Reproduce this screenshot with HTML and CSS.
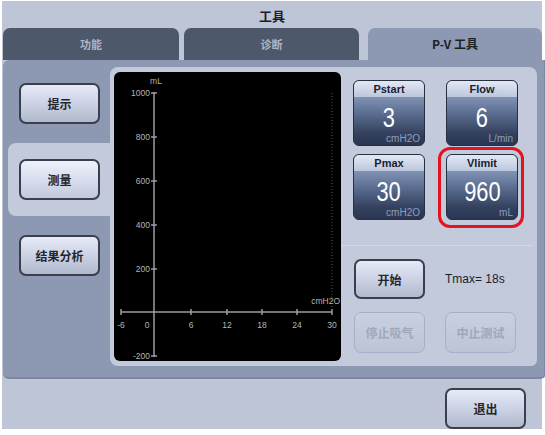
FILE: index.html
```html
<!DOCTYPE html>
<html>
    <head>
        <meta charset="UTF-8">
        <title>工具 - P-V 工具</title>
        <link rel="stylesheet" href="styles.css">
    </head>
    <body>
        <div class="window">
            <div class="title">工具</div>
            <div class="tabs">
                <div class="tab tab-first">功能</div>
                <div class="tab tab-second">诊断</div>
                <div class="tab active">P-V 工具</div>
            </div>
            <div class="panel">
                <div class="side">
                    <div class="slot"><button class="btn">提示</button></div>
                    <div class="slot current"><button class="btn">测量</button></div>
                    <div class="slot"><button class="btn">结果分析</button></div>
                </div>
                <div class="work">
                    <div class="chart">
                        <svg class="plot" width="227" height="289" viewBox="0 0 227 289">
                            <line class="dots" x1="218" y1="21" x2="218" y2="237"/>
                            <g class="axis">
                                <line x1="40" y1="20" x2="40" y2="285"/>
                                <line x1="7" y1="240" x2="218" y2="240"/>
                                <line x1="37" y1="21" x2="43" y2="21"/>
                                <line x1="37" y1="65" x2="43" y2="65"/>
                                <line x1="37" y1="109" x2="43" y2="109"/>
                                <line x1="37" y1="153" x2="43" y2="153"/>
                                <line x1="37" y1="197" x2="43" y2="197"/>
                                <line x1="37" y1="284" x2="43" y2="284"/>
                                <line x1="7" y1="237" x2="7" y2="243"/>
                                <line x1="77" y1="237" x2="77" y2="243"/>
                                <line x1="113" y1="237" x2="113" y2="243"/>
                                <line x1="148" y1="237" x2="148" y2="243"/>
                                <line x1="183" y1="237" x2="183" y2="243"/>
                                <line x1="218" y1="237" x2="218" y2="243"/>
                            </g>
                            <g class="labels ylabels">
                                <text x="36" y="24">1000</text>
                                <text x="36" y="68">800</text>
                                <text x="36" y="112">600</text>
                                <text x="36" y="156">400</text>
                                <text x="36" y="200">200</text>
                                <text x="36" y="287">-200</text>
                            </g>
                            <g class="labels xlabels">
                                <text x="7" y="256">-6</text>
                                <text x="33" y="256">0</text>
                                <text x="77" y="256">6</text>
                                <text x="113" y="256">12</text>
                                <text x="148" y="256">18</text>
                                <text x="183" y="256">24</text>
                                <text x="218" y="256">30</text>
                            </g>
                            <text class="labels" x="42" y="12" text-anchor="middle">mL</text>
                            <text class="labels" x="226" y="232" text-anchor="end">cmH2O</text>
                        </svg>
                    </div>
                    <div class="controls">
                        <div class="params">
                            <div class="param">
                                <div class="param-name">Pstart</div>
                                <div class="param-body"><span class="param-value">3</span><span class="param-unit">cmH2O</span></div>
                            </div>
                            <div class="param">
                                <div class="param-name">Flow</div>
                                <div class="param-body"><span class="param-value">6</span><span class="param-unit">L/min</span></div>
                            </div>
                            <div class="param">
                                <div class="param-name">Pmax</div>
                                <div class="param-body"><span class="param-value">30</span><span class="param-unit">cmH2O</span></div>
                            </div>
                            <div class="param selected">
                                <div class="param-name">Vlimit</div>
                                <div class="param-body"><span class="param-value">960</span><span class="param-unit">mL</span></div>
                            </div>
                        </div>
                        <div class="actions">
                            <button class="btn btn-small">开始</button>
                            <span class="tmax">Tmax= 18s</span>
                            <button class="btn btn-small" disabled>停止吸气</button>
                            <button class="btn btn-small" disabled>中止测试</button>
                        </div>
                    </div>
                </div>
            </div>
            <div class="footer">
                <button class="btn">退出</button>
            </div>
        </div>
    </body>
</html>
```

FILE: styles.css
```css
body {
    margin : 0;
    background : #ffffff;
    font-family : "Noto Sans CJK SC", "Liberation Sans", sans-serif;
}
.window {
    margin : 1px 0 0 2px;
    width : 540px;
    height : 428px;
    background : #bec5d7;
    display : flex;
    flex-direction : column;
}
.title {
    height : 27px;
    line-height : 30px;
    text-align : center;
    font-size : 13px;
    font-weight : 700;
    color : #1c1f26;
}
.tabs {
    height : 32px;
    display : flex;
    padding-left : 1px;
}
.tab {
    background : #4d586b;
    border-radius : 7px 7px 0 0;
    color : #aeb6c6;
    font-size : 11px;
    font-weight : 700;
    text-align : center;
    line-height : 32px;
}
.tab-first {
    width : 176px;
    margin-right : 5px;
}
.tab-second {
    width : 175px;
    margin-right : 9px;
}
.tab.active {
    flex : 1;
    background : #8d99b2;
    color : #1c1f26;
    font-size : 12px;
}
.panel {
    margin-left : 1px;
    width : 536px;
    height : 311px;
    background : #8d99b2;
    border-right : 2px solid #7b88a4;
    border-bottom : 2px solid #7b88a4;
    border-radius : 6px 0 6px 6px;
    display : flex;
    padding : 7px 0 0 5px;
    box-sizing : content-box;
}
.side {
    width : 102px;
    display : flex;
    flex-direction : column;
    gap : 3px;
}
.slot {
    height : 73px;
    display : flex;
    align-items : center;
    border-radius : 8px 0 0 8px;
}
.slot.current {
    background : #c3cadb;
}
.slot .btn {
    margin-left : 11px;
}
.btn {
    width : 81px;
    height : 41px;
    border : 2px solid #3a3f4b;
    border-radius : 7px;
    background : linear-gradient(#e6eaf8, #c9d0e2 55%, #b1b9ce);
    font-family : "Noto Sans CJK SC", sans-serif;
    font-size : 12px;
    font-weight : 700;
    color : #23262e;
    padding : 0;
}
.current .btn {
    background : linear-gradient(#eef1fc, #d6dcec 55%, #c2c9dc);
}
.work {
    width : 423px;
    height : 289px;
    padding : 5px 0 5px 4px;
    background : #c3cadb;
    border-radius : 8px 8px 6px 8px;
    display : flex;
}
.chart {
    width : 227px;
    height : 289px;
    background : #000000;
    border-radius : 6px;
}
.plot {
    display : block;
}
.axis line {
    stroke : #9d9d9d;
    stroke-width : 1.5;
}
.dots {
    stroke : #555555;
    stroke-width : 1;
    stroke-dasharray : 1 2;
}
.labels {
    fill : #b5b5b5;
    font-family : "Liberation Sans", sans-serif;
    font-size : 8.5px;
}
.ylabels {
    text-anchor : end;
}
.xlabels {
    text-anchor : middle;
}
.controls {
    flex : 1;
    display : flex;
    flex-direction : column;
}
.params {
    display : grid;
    grid-template-columns : 72px 72px;
    grid-auto-rows : 66px;
    column-gap : 21px;
    row-gap : 8px;
    padding : 8px 0 0 12px;
}
.param {
    position : relative;
    display : flex;
    flex-direction : column;
    border : 1.5px solid #29303d;
    border-radius : 6px;
    background : #2e3b57;
}
.param-name {
    height : 16px;
    line-height : 17px;
    border-radius : 5px 5px 0 0;
    background : linear-gradient(#e2e8f5, #bcc7dd);
    font-family : "Liberation Sans", sans-serif;
    font-size : 11px;
    font-weight : 700;
    color : #1b2130;
    text-align : center;
}
.param-body {
    flex : 1;
    position : relative;
    border-radius : 0 0 5px 5px;
    background : linear-gradient(#8193b5, #5a6d90 35%, #34425f 75%, #2a3651);
    text-align : center;
}
.param-value {
    display : inline-block;
    margin-top : 7px;
    line-height : 27px;
    font-family : "Liberation Sans", sans-serif;
    font-size : 28px;
    color : #ffffff;
    transform : scaleX(0.78);
}
.param-unit {
    position : absolute;
    right : 4px;
    bottom : 1px;
    font-family : "Liberation Sans", sans-serif;
    font-size : 10px;
    color : #8f9dba;
}
.param.selected::after {
    content : "";
    position : absolute;
    top : -8px;
    left : -9px;
    right : -7px;
    bottom : -9px;
    border : 3px solid #e3141d;
    border-radius : 12px;
}
.actions {
    margin : 25px 4px 0 0;
    border-top : 1px solid #d4d9e6;
    display : grid;
    grid-template-columns : 71px 71px;
    grid-template-rows : 40px 41px;
    column-gap : 20px;
    row-gap : 13px;
    padding : 13px 0 0 13px;
    align-items : center;
}
.btn-small {
    width : 71px;
    height : 100%;
}
.btn:disabled {
    border : 1.5px solid #a7b0c4;
    background : linear-gradient(#c9d0e0, #bcc4d6);
    color : #9fa8ba;
}
.tmax {
    font-family : "Liberation Sans", sans-serif;
    font-size : 12px;
    color : #1c1f26;
}
.footer {
    flex : 1;
    display : flex;
    justify-content : flex-end;
    align-items : flex-start;
    padding : 9px 16px 0 0;
}
```
